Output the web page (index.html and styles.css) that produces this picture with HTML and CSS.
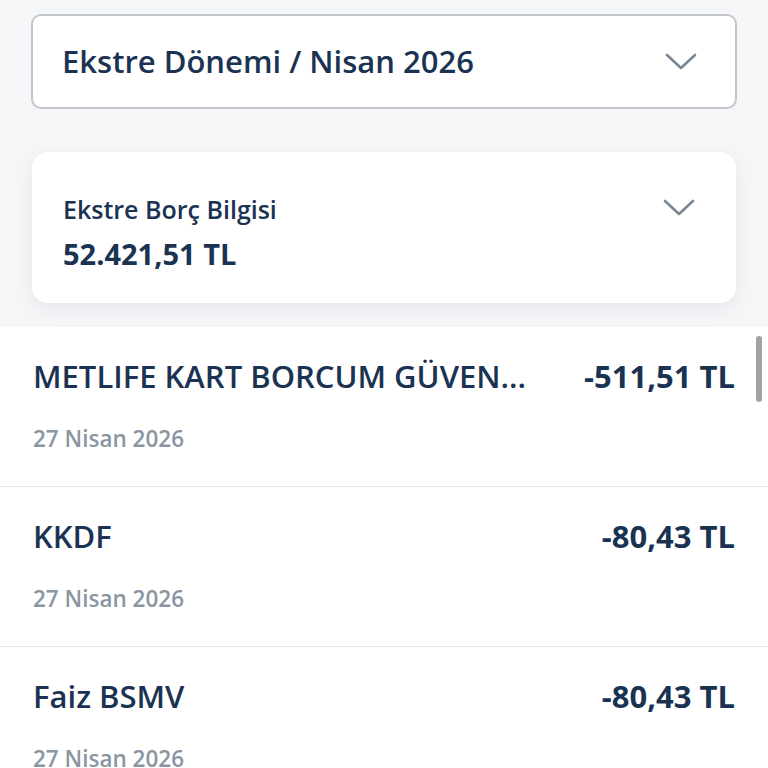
FILE: index.html
```html
<!DOCTYPE html>
<html lang="tr">
<head>
<meta charset="utf-8">
<title>Ekstre</title>
<link rel="stylesheet" href="styles.css">
</head>
<body>
<div class="top">
  <div class="select">
    <span class="select-text">Ekstre Dönemi / Nisan 2026</span>
    <svg class="chev" width="32" height="18" viewBox="0 0 32 18"><path d="M2 2 L16 15 L30 2" fill="none" stroke="#7b8694" stroke-width="2.6" stroke-linecap="round" stroke-linejoin="round"/></svg>
  </div>
  <div class="card">
    <div class="card-info">
      <div class="card-label">Ekstre Borç Bilgisi</div>
      <div class="card-amount">52.421,51 TL</div>
    </div>
    <svg class="chev chev-card" width="32" height="18" viewBox="0 0 32 18"><path d="M2 2 L16 15 L30 2" fill="none" stroke="#7b8694" stroke-width="2.6" stroke-linecap="round" stroke-linejoin="round"/></svg>
  </div>
</div>
<div class="list">
  <div class="row">
    <div class="row-main">
      <span class="row-title">METLIFE KART BORCUM GÜVEN...</span>
      <span class="row-amount">-511,51 TL</span>
    </div>
    <div class="row-date">27 Nisan 2026</div>
  </div>
  <div class="row">
    <div class="row-main">
      <span class="row-title">KKDF</span>
      <span class="row-amount">-80,43 TL</span>
    </div>
    <div class="row-date">27 Nisan 2026</div>
  </div>
  <div class="row">
    <div class="row-main">
      <span class="row-title">Faiz BSMV</span>
      <span class="row-amount">-80,43 TL</span>
    </div>
    <div class="row-date">27 Nisan 2026</div>
  </div>
  <div class="scrollbar"></div>
</div>
</body>
</html>
```
FILE: styles.css
```css
html, body {
  margin: 0;
  padding: 0;
  background: #ffffff;
  font-family: "Open Sans", "Liberation Sans", sans-serif;
  color: #1b3352;
  height: 768px;
  overflow: hidden;
}
.top {
  background: #f5f6f8;
  padding: 14px 31px 24px 31px;
  display: flex;
  flex-direction: column;
  gap: 43px;
}
.select {
  height: 91px;
  border: 2px solid #c3c7cd;
  border-radius: 10px;
  background: #ffffff;
  display: flex;
  align-items: center;
  justify-content: space-between;
  padding: 0 38px 0 29px;
}
.select-text {
  font-size: 31px;
  font-weight: 600;
  line-height: 1;
  color: #1b3352;
}
.card {
  margin: 0 1px;
  height: 151px;
  background: #ffffff;
  border-radius: 16px;
  box-shadow: 0 6px 18px rgba(30, 40, 60, 0.07);
  display: flex;
  align-items: flex-start;
  justify-content: space-between;
  padding: 0 41px 0 31px;
  box-sizing: border-box;
}
.card-info {
  padding-top: 42px;
  display: flex;
  flex-direction: column;
  gap: 13px;
}
.card-label {
  font-size: 25px;
  font-weight: 600;
  line-height: 30px;
}
.card-amount {
  font-size: 29px;
  line-height: 34px;
  font-weight: 700;
}
.chev-card {
  margin-top: 47px;
}
.list {
  position: relative;
  background: #ffffff;
}
.row {
  height: 160px;
  border-bottom: 1px solid #e6e8eb;
  padding: 0 33px;
  box-sizing: border-box;
}
.row-main {
  display: flex;
  justify-content: space-between;
  align-items: center;
  gap: 40px;
  padding-top: 29px;
  height: 40px;
}
.row-title {
  font-size: 31px;
  font-weight: 600;
  line-height: 40px;
  white-space: nowrap;
}
.row-amount {
  font-size: 31px;
  line-height: 40px;
  font-weight: 700;
  white-space: nowrap;
}
.row-date {
  margin-top: 28px;
  font-size: 22.5px;
  font-weight: 600;
  line-height: 30px;
  color: #8a95a3;
}
.scrollbar {
  position: absolute;
  right: 6px;
  top: 9px;
  width: 6px;
  height: 66px;
  border-radius: 3px;
  background: #a3a3a3;
}
```
